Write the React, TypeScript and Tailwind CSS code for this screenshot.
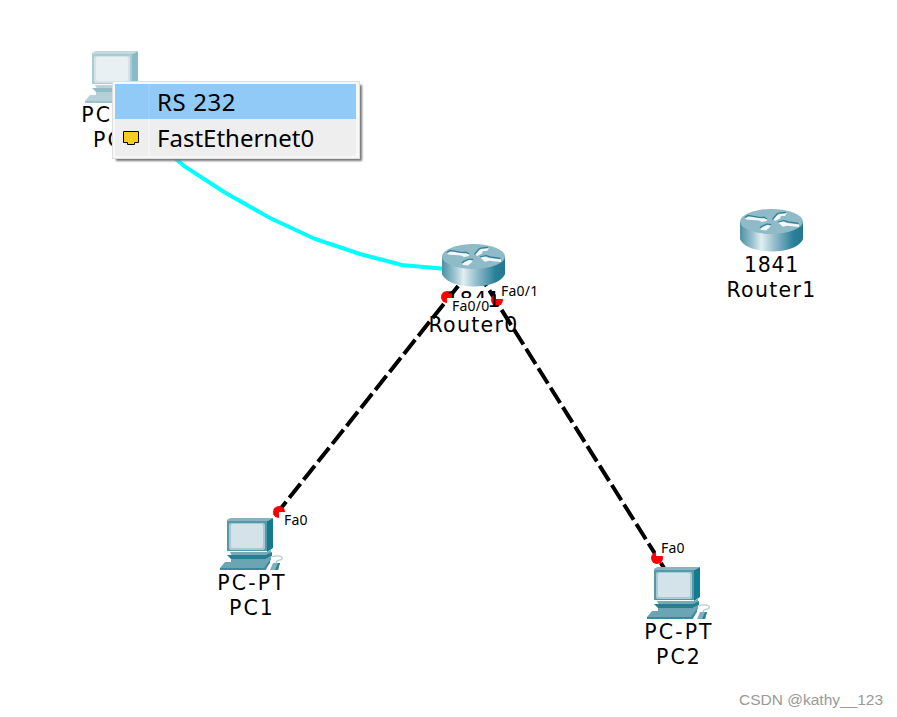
const pcs = [
  { left: 85, top: 51, model: "PC-PT", name: "PC0", faded: true },
  { left: 220, top: 518, model: "PC-PT", name: "PC1", faded: false },
  { left: 647, top: 567, model: "PC-PT", name: "PC2", faded: false },
];

const routers = [
  { left: 442, top: 244, model: "1841", name: "Router0" },
  { left: 740, top: 209, model: "1841", name: "Router1" },
];

const ports = [
  { left: 447, top: 298, name: "Fa0/0" },
  { left: 496, top: 283, name: "Fa0/1" },
  { left: 279, top: 512, name: "Fa0" },
  { left: 656, top: 540, name: "Fa0" },
];

const PcIcon = ({ faded }: { faded: boolean }) => (
  <svg width="64" height="53" viewBox="0 0 64 53" className={faded ? "opacity-50" : ""}>
    <path d="M7 2L11 0H53L48 3V33H7Z" fill="#5fa0af" />
    <path d="M47 3L53 0V30L47 34Z" fill="#137a90" />
    <path d="M7 2L11 0H53L48 3H7Z" fill="#86b5c1" />
    <rect x="7" y="3" width="40" height="30" fill="#5598a9" />
    <rect x="9" y="5" width="36" height="27" rx="2" fill="#a9c9d3" />
    <rect x="11" y="6" width="32" height="24" rx="2" fill="#d3e3e9" />
    <path d="M10 34H47L51 32V36L46 38H12Z" fill="#77a9b6" />
    <path d="M7 37H46L52 34V38L46 41H11Z" fill="#277d92" />
    <path d="M11 41H46L51 38V42L46 44H11Z" fill="#6ba4b2" />
    <path d="M5 44H46L51 41L46 52H0V50Z" fill="#6ba4b3" />
    <path d="M0 50H44L50 42V45L45 52H0Z" fill="#3b899d" />
    <path d="M52 39C57 37 64 38 62 41C61 43 56 41 56 45" fill="none" stroke="#b3cdd3" strokeWidth="1.3" />
    <path d="M53 45H60L58 52H50Z" fill="#7db1bd" />
    <path d="M58 45H60L58 52H55Z" fill="#347f91" />
  </svg>
);

const RouterIcon = () => (
  <svg width="63" height="43" viewBox="0 0 63 43">
    <defs>
      <linearGradient id="side">
        <stop offset="0" stopColor="#4c91a5" />
        <stop offset="0.2" stopColor="#9cc3cf" />
        <stop offset="0.34" stopColor="#e2eef1" />
        <stop offset="0.55" stopColor="#92bdca" />
        <stop offset="0.85" stopColor="#29809a" />
        <stop offset="1" stopColor="#23788f" />
      </linearGradient>
    </defs>
    <path d="M0 12V30C3 38 17 42.5 31.500 42.500S60 38 63 30V12Z" fill="url(#side)" />
    <ellipse cx="31.500" cy="12.500" rx="31.500" ry="12.500" fill="#8fbac8" />
    <g fill="#f2f8f9">
      <path d="M5 9L9 7.500L22 9.500L27 9.500V12L22 13L19 11.500L6 10.500Z" />
      <path d="M33 10L38 5.500L47 4L45 7L41 7L40 9.500L35 12Z" />
      <path d="M38 13.500L43 12.500L47 14L59 15.500V18L47 16.800L43 17.800Z" />
      <path d="M20 19.500L27 16L31 16.500L29 19L26 21.500L21 21Z" />
    </g>
    <g fill="none" stroke="#327d91" strokeWidth="1.200">
      <path d="M5 8.500L8 6.500L20 8.500L24 8L27 10" />
      <path d="M32.500 10.500L37 5L39 4L46 3.300" />
      <path d="M38 13L44 11.500L48 12.800L58.500 14.300" />
      <path d="M20 19L22 17.200L27 15L31 15.700" />
    </g>
  </svg>
);

const PortMenu = () => (
  <div className="absolute left-[112px] top-[81px] flex h-[78px] w-[248px] flex-col border border-[#dedede] bg-[#f7f7f7] p-[2px] font-['Noto_Sans',sans-serif] text-[24px] text-black shadow-[3px_3px_2px_-1px_#777]">
    <div className="flex h-[35px] w-[241px] items-center bg-[#91c9f7]">
      <span className="h-full w-[35px] border-r-2 border-[#9acdf7]" />
      <span className="pl-[7px] tracking-[0.6px]">RS 232</span>
    </div>
    <div className="flex h-[37px] w-[241px] items-center bg-[#eee]">
      <span className="flex h-full w-[35px] items-center border-r-2 border-[#f3f3f3] pl-[8px]">
        <svg width="16" height="14" viewBox="0 0 16 14">
          <path d="M.5 .5H15.500V11.500H11.500V13.500H4.500V11.500H.5Z" fill="#f8cb25" stroke="#000" />
        </svg>
      </span>
      <span className="pl-[7px]">FastEthernet0</span>
    </div>
  </div>
);

export default function App() {
  return (
    <main className="relative h-[717px] w-[897px] overflow-hidden bg-white font-['DejaVu_Sans',sans-serif] text-black">
      {/* Cables */}
      <svg className="absolute left-0 top-0" width="897" height="717">
        <path d="M168 152L184 166L224 192L270 218L315 239L360 254L402 265L446 269" fill="none" stroke="#00ffff" strokeWidth="4" />
        <g stroke="#000" strokeWidth="4" strokeDasharray="18 5">
          <path d="M274 517L474 266" strokeDashoffset="-1.5" />
          <path d="M664 568L474 266" strokeDashoffset="12" />
        </g>
        <g fill="#f00">
          <circle cx="447" cy="297" r="6" />
          <circle cx="497" cy="300" r="6" />
          <circle cx="279" cy="512" r="6" />
          <circle cx="657" cy="558" r="6" />
        </g>
      </svg>

      {/* Devices */}
      {pcs.map((pc) => (
        <div key={pc.name} className="absolute flex w-[64px] flex-col items-center" style={{ left: pc.left, top: pc.top }}>
          <PcIcon faded={pc.faded} />
          <div className={`flex flex-col items-center whitespace-nowrap text-[20.5px] leading-[25px] tracking-[2.1px] ${pc.faded ? "-mt-px pr-[2px]" : "mt-0"}`}>
            <span>{pc.model}</span>
            <span>{pc.name}</span>
          </div>
        </div>
      ))}
      {routers.map((router) => (
        <div key={router.name} className="absolute flex w-[63px] flex-col items-center" style={{ left: router.left, top: router.top }}>
          <RouterIcon />
          <div className="mt-px flex flex-col items-center whitespace-nowrap text-[20.5px] leading-[25px]">
            <span className="tracking-[0.7px]">{router.model}</span>
            <span className="tracking-[1.3px]">{router.name}</span>
          </div>
        </div>
      ))}

      {/* Port names */}
      {ports.map((port) => (
        <span
          key={port.left}
          className="absolute h-[16px] bg-white pl-[5px] font-['Noto_Sans',sans-serif] text-[14px] leading-[16px] tracking-[0.2px]"
          style={{ left: port.left, top: port.top }}
        >
          {port.name}
        </span>
      ))}

      <PortMenu />
      <footer className="absolute left-[739px] top-[690px] whitespace-nowrap font-['Liberation_Sans',sans-serif] text-[15.5px] leading-[20px] text-[#999]">
        CSDN @kathy__123
      </footer>
    </main>
  );
}
